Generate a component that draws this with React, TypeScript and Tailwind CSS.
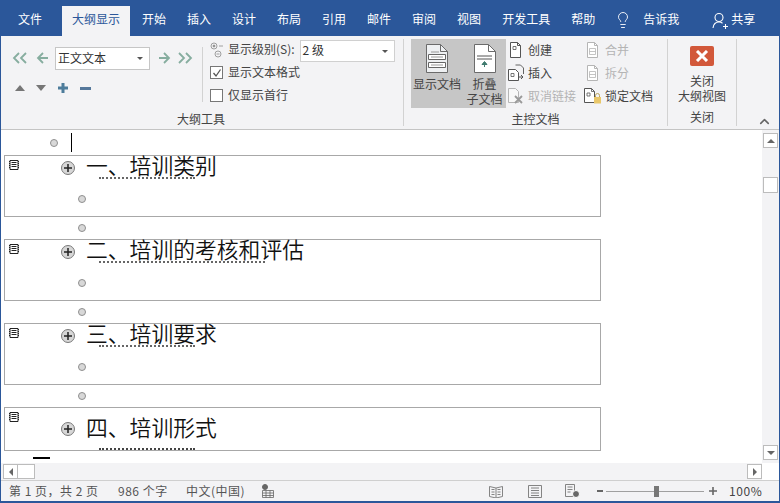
import React from "react";
import { ChevronUp, Lightbulb } from "lucide-react";

const FONT = '"Noto Sans CJK SC", "Noto Sans", sans-serif';

type Kind = "create" | "insert" | "unlink" | "lines" | "lock";

function SmallIcon({ kind, dim }: { kind: Kind; dim?: boolean }) {
  const c = dim ? "#b5b5b5" : "#555";
  const base = (
    <>
      <path d="M2.500 .5h7l3 3v12h-10z" fill="#fff" stroke={c} />
      <path d="M9.500 .5v3h3" stroke={c} />
    </>
  );
  if (kind === "create")
    return (
      <svg width="16" height="16" viewBox="0 0 16 16" fill="none" className="shrink-0">
        {base}
        <path d="M5 4.500h3v3H5z" stroke={c} strokeWidth=".8" />
      </svg>
    );
  if (kind === "lines")
    return (
      <svg width="16" height="16" viewBox="0 0 16 16" fill="none" className="shrink-0">
        {base}
        <path d="M4.500 6.500h6v6h-6zM4.500 9.500h6" stroke={c} strokeWidth=".8" />
      </svg>
    );
  if (kind === "insert")
    return (
      <svg width="16" height="18" viewBox="0 0 16 18" fill="none" className="shrink-0">
        <path d="M7.500 1h5l3 3v6" stroke={c} strokeWidth=".9" />
        <path d="M.5 5.500h7l3 3v8H.5z" fill="#fff" stroke={c} />
        <path d="M3 9.500h3v3H3z" stroke={c} strokeWidth=".8" />
        <path d="M11 13h4M13 11l2 2-2 2" stroke={c} strokeWidth="1" />
      </svg>
    );
  if (kind === "unlink")
    return (
      <svg width="16" height="16" viewBox="0 0 16 16" fill="none" className="shrink-0">
        <path d="M.5 .5h7l3 3v11H.5z" fill="#f8f8f8" stroke={c} />
        <path d="M7 8l7 7M14 8l-7 7" stroke="#9a9a9a" strokeWidth="1.800" />
      </svg>
    );
  return (
    <svg width="18" height="16" viewBox="0 0 18 16" fill="none" className="shrink-0">
      <path d="M.5 .5h7l3 3v11H.5z" fill="#fff" stroke={c} />
      <path d="M7.500 .5v3h3M3 5h3v3H3z" stroke={c} strokeWidth=".8" />
      <path d="M11.500 9V7.500a2 2 0 0 1 4 0V9" stroke="#b9a35c" />
      <rect x="10" y="9" width="7" height="6.500" fill="#e9c76a" />
    </svg>
  );
}

function BigDoc({ fold }: { fold?: boolean }) {
  return (
    <svg width="22" height="29" viewBox="0 0 22 29" fill="none">
      <path d="M.5 .5h14l7 7v21H.5z" fill={fold ? "#fff" : "#eef0f2"} stroke="#6b6b6b" />
      <path d="M14.500 .5v7h7" stroke="#6b6b6b" />
      {fold ? (
        <>
          <path d="M3 12h15M3 15h15" stroke="#555" strokeWidth="1" />
          <path d="M10.500 23v-4M8 20.500l2.500-3 2.500 3z" stroke="#3f7a6e" fill="#3f7a6e" />
        </>
      ) : (
        <>
          <path d="M2.500 10.500h17v5h-17zM2.500 18.500h17v5h-17z" stroke="#666" fill="#fff" />
          <path d="M5 13h12M5 21h12M5 8h8" stroke="#999" />
        </>
      )}
    </svg>
  );
}

function Tabs() {
  const left = ["开始", "插入", "设计", "布局", "引用", "邮件", "审阅", "视图", "开发工具", "帮助"];
  return (
    <div className="h-[36px] bg-[#2b579a] flex text-white text-[12px] shrink-0">
      <div className="w-[62px] pt-[10px] pl-[18px]">文件</div>
      <div className="w-[68px] mt-[6px] pt-[4px] bg-[#f3f3f5] text-[#2b579a] text-center">大纲显示</div>
      <div className="flex gap-[21px] pl-[12px] pt-[10px]">
        {left.map((t) => (
          <span key={t}>{t}</span>
        ))}
      </div>
      <div className="ml-[19px] pt-[11px]">
        <Lightbulb size={18} strokeWidth={1.2} />
      </div>
      <span className="ml-[11px] pt-[10px]">告诉我</span>
      <div className="ml-[33px] pt-[12px]">
        <svg width="16" height="17" viewBox="0 0 16 17" fill="none" stroke="#fff" strokeWidth="1.100">
          <circle cx="7" cy="5.500" r="4" />
          <path d="M1 16c.5-4 3-6 6-6 1.500 0 2.500.4 3.500 1.200M11 14.500h5M13.500 12v5" />
        </svg>
      </div>
      <span className="ml-[3px] pt-[10px]">共享</span>
    </div>
  );
}

function Small({ icon, text, dim }: { icon: React.ReactNode; text: string; dim?: boolean }) {
  return (
    <div className={`h-[23px] flex items-center gap-[4px] whitespace-nowrap ${dim ? "text-[#b4b4b4]" : ""}`}>
      <span className="w-[16px] flex justify-center">{icon}</span>
      <span>{text}</span>
    </div>
  );
}

function Arrow({ d, color }: { d: string; color: string }) {
  return (
    <svg width="16" height="12" viewBox="0 0 16 12" fill="none" stroke={color} strokeWidth="1.800">
      <path d={d} />
    </svg>
  );
}

function Ribbon() {
  return (
    <div className="h-[94px] bg-[#f3f3f5] border-b border-[#c4c4c4] flex text-[12px] text-[#444] shrink-0">
      {/* Group 1 */}
      <div className="w-[402px] flex flex-col">
        <div className="h-[76px] flex pt-[2px]">
          <div className="w-[202px] border-r border-[#d2d2d2] h-[55px] mt-[9px] flex flex-col pl-[11px]">
            <div className="flex items-center h-[23px]">
              <span className="-mt-[1px]">
                <Arrow d="M7 1 2 6l5 5M14 1 9 6l5 5" color="#86ad9f" />
              </span>
              <span className="ml-[8px] -mt-[1px]">
                <Arrow d="M7 1 2 6l5 5M2 6h10" color="#86ad9f" />
              </span>
              <div className="ml-[3px] w-[95px] h-[23px] bg-white border border-[#c6c6c6] flex items-center justify-between pl-[2px] pr-[6px] text-[#333]">
                <span className="-mt-[1px]">正文文本</span>
                <span className="w-0 h-0 border-x-[3px] border-x-transparent border-t-[3px] border-t-[#555]" />
              </div>
              <span className="ml-[5px] -mt-[1px]">
                <Arrow d="M9 1l5 5-5 5M14 6H4" color="#86ad9f" />
              </span>
              <span className="ml-[6px] -mt-[1px]">
                <Arrow d="M2 1l5 5-5 5M9 1l5 5-5 5" color="#86ad9f" />
              </span>
            </div>
            <div className="flex items-center gap-[11px] mt-[11px] pl-[3px] h-[14px]">
              <span className="w-0 h-0 border-x-[5px] border-x-transparent border-b-[6px] border-b-[#767676]" />
              <span className="w-0 h-0 border-x-[5px] border-x-transparent border-t-[6px] border-t-[#767676]" />
              <svg width="10" height="10" viewBox="0 0 10 10" className="ml-[1px]">
                <path d="M3.500 0h3v3.500H10v3H6.500V10h-3V6.500H0v-3h3.500z" fill="#4d7c9b" />
              </svg>
              <span className="w-[11px] h-[3px] bg-[#55789b] ml-[1px]" />
            </div>
          </div>
          <div className="pl-[7px] flex flex-col">
            <div className="flex items-center h-[23px]">
              <svg width="15" height="16" viewBox="0 0 15 16" fill="none" stroke="#8a8a8a" strokeWidth=".8">
                <circle cx="4" cy="4" r="3" />
                <circle cx="4" cy="4" r="1" fill="#8a8a8a" />
                <circle cx="8" cy="12" r="3" />
                <path d="M9 4h4M6.500 12h3" />
              </svg>
              <span className="ml-[3px] -mt-[1px] whitespace-nowrap">显示级别(S):</span>
              <div className="ml-[5px] w-[95px] h-[22px] mt-[3px] bg-white border border-[#d0d0d0] flex items-center justify-between px-[2px] pr-[6px] text-[#333]">
                <span className="-mt-[2px]">2 级</span>
                <span className="w-0 h-0 border-x-[3px] border-x-transparent border-t-[3px] border-t-[#555]" />
              </div>
            </div>
            <div className="flex items-center h-[23px] gap-[5px]">
              <span className="w-[13px] h-[13px] bg-white border border-[#777] flex items-center justify-center">
                <svg width="10" height="10" viewBox="0 0 10 10" fill="none" stroke="#555" strokeWidth="1.300">
                  <path d="M1.500 5 4 8l4.500-6.500" />
                </svg>
              </span>
              <span className="-mt-[1px]">显示文本格式</span>
            </div>
            <div className="flex items-center h-[23px] gap-[5px]">
              <span className="w-[13px] h-[13px] bg-white border border-[#777]" />
              <span className="-mt-[1px]">仅显示首行</span>
            </div>
          </div>
        </div>
        <div className="text-center leading-[18px] -mt-[2px] -ml-[2px]">大纲工具</div>
      </div>
      {/* Group 2 */}
      <div className="w-[264px] border-l border-[#d2d2d2] my-[3px] flex flex-col">
        <div className="h-[72px] flex pl-[7px]">
          <div className="w-[95px] h-[69px] bg-[#c6c6c6] flex">
            <div className="w-[52px] flex flex-col items-center pt-[5px] leading-[15px]">
              <BigDoc />
              <span className="mt-[3px] whitespace-nowrap">显示文档</span>
            </div>
            <div className="flex-1 flex flex-col items-center pt-[5px] leading-[15px]">
              <BigDoc fold />
              <span className="mt-[3px]">折叠</span>
              <span className="whitespace-nowrap">子文档</span>
            </div>
          </div>
          <div className="w-[77px] ml-[2px] -mt-[1px]">
            <Small icon={<SmallIcon kind="create" />} text="创建" />
            <Small icon={<SmallIcon kind="insert" />} text="插入" />
            <Small icon={<SmallIcon kind="unlink" dim />} text="取消链接" dim />
          </div>
          <div className="-mt-[1px]">
            <Small icon={<SmallIcon kind="lines" dim />} text="合并" dim />
            <Small icon={<SmallIcon kind="lines" dim />} text="拆分" dim />
            <Small icon={<SmallIcon kind="lock" />} text="锁定文档" />
          </div>
        </div>
        <div className="text-center leading-[18px] mt-[2px]">主控文档</div>
      </div>
      {/* Group 3 */}
      <div className="w-[69px] border-l border-[#d2d2d2] my-[3px] flex flex-col items-center">
        <div className="w-[24px] h-[24px] mt-[7px] bg-[#d2583a] rounded-[2px] flex items-center justify-center">
          <svg width="14" height="12" viewBox="0 0 14 12" stroke="#fff" strokeWidth="3" fill="none">
            <path d="M2 1l10 10M12 1 2 11" />
          </svg>
        </div>
        <div className="text-center leading-[15px] mt-[7px] whitespace-nowrap">
          关闭
          <br />
          大纲视图
        </div>
        <div className="leading-[18px] mt-[5px]">关闭</div>
      </div>
      <div className="flex-1 border-l border-[#d2d2d2] my-[3px] flex items-end justify-end pr-[7px]">
        <div className="-mb-[3px]">
          <ChevronUp size={15} strokeWidth={2.500} color="#666" />
        </div>
      </div>
    </div>
  );
}

function Bullet() {
  return (
    <div className="h-[22px] flex items-center ml-[77px]">
      <span className="w-[8px] h-[8px] rounded-full bg-[#d8d8d8] border border-[#8f8f8f]" />
    </div>
  );
}

function MiniDoc() {
  return (
    <svg width="10" height="10" viewBox="0 0 10 10" className="mt-[4px] ml-[4px] shrink-0" fill="none">
      <path d="M1 .5h8v9H1z" fill="#fff" stroke="#222" />
      <path d="M2.500 2.500h5M2.500 4.500h5M2.500 6.500h5" stroke="#222" />
      <path d="M0 1.500h1M0 3.500h1M0 5.500h1M0 7.500h1M9 1.500h1M9 3.500h1M9 5.500h1M9 7.500h1" stroke="#222" />
    </svg>
  );
}

function Box({ title, h, last, lineW }: { title: string; h: string; last?: boolean; lineW: string }) {
  return (
    <div className={`relative ml-[3px] w-[597px] border border-[#a8a8a8] flex ${h}`}>
      <MiniDoc />
      <div className={`flex items-start ml-[42px] ${last ? "pt-[10px]" : ""}`}>
        <span
          className={`w-[14px] h-[14px] ${last ? "mt-[4px]" : "mt-[5px]"} rounded-full bg-[#d6d6d6] border border-[#7a7a7a] flex items-center justify-center shrink-0`}
        >
          <svg width="8" height="8" viewBox="0 0 8 8" stroke="#222" strokeWidth="1.500">
            <path d="M0 4h8M4 0v8" />
          </svg>
        </span>
        <div className="ml-[11px] -mt-[2px]">
          <div className="text-[21.800px] leading-[22px] text-[#111] whitespace-nowrap" style={{ fontWeight: 350 }}>
            {title}
          </div>
          {!last && <div className={`ml-[13px] mt-[1px] border-b-2 border-dotted border-[#666] ${lineW}`} />}
        </div>
      </div>
      {!last && (
        <div className="absolute left-[73px] top-[39px]">
          <span className="block w-[8px] h-[8px] rounded-full bg-[#d8d8d8] border border-[#8f8f8f]" />
        </div>
      )}
      {last && <div className="absolute left-[94px] bottom-0 w-[96px] border-b-2 border-dotted border-[#444]" />}
    </div>
  );
}

function Doc() {
  return (
    <div className="flex-1 min-w-0 bg-white">
      <div className="h-[25px] flex items-center pl-[49px]">
        <span className="w-[8px] h-[8px] rounded-full bg-[#d8d8d8] border border-[#8f8f8f]" />
        <span className="ml-[13px] w-px h-[19px] bg-black" />
      </div>
      <Box title="一、培训类别" h="h-[62px]" lineW="w-[96px]" />
      <Bullet />
      <Box title="二、培训的考核和评估" h="h-[62px]" lineW="w-[166px]" />
      <Bullet />
      <Box title="三、培训要求" h="h-[62px]" lineW="w-[96px]" />
      <Bullet />
      <Box title="四、培训形式" h="h-[44px]" last lineW="w-[96px]" />
      <div className="ml-[32px] mt-[6px] w-[17px] h-[2px] bg-black" />
    </div>
  );
}

function VScroll() {
  return (
    <div className="w-[17px] bg-[#f3f3f5] flex flex-col items-center shrink-0">
      <div className="w-[15px] h-[15px] mt-[3px] bg-white border border-[#bcbcbc] flex items-center justify-center">
        <span className="w-0 h-0 border-x-[4px] border-x-transparent border-b-[4px] border-b-[#666]" />
      </div>
      <div className="w-[15px] h-[16px] mt-[29px] bg-white border border-[#bcbcbc]" />
      <div className="flex-1" />
      <div className="w-[15px] h-[15px] mb-[3px] bg-white border border-[#bcbcbc] flex items-center justify-center">
        <span className="w-0 h-0 border-x-[4px] border-x-transparent border-t-[4px] border-t-[#666]" />
      </div>
    </div>
  );
}

function HScroll() {
  return (
    <div className="h-[17px] flex shrink-0">
      <div className="flex-1 bg-[#f3f3f5] flex items-center pl-[2px] justify-between">
        <div className="flex">
          <div className="w-[15px] h-[15px] bg-white border border-[#bcbcbc] flex items-center justify-center">
            <span className="w-0 h-0 border-y-[4px] border-y-transparent border-r-[4px] border-r-[#666]" />
          </div>
          <div className="w-[17px] h-[15px] bg-white border border-l-0 border-[#bcbcbc]" />
        </div>
        <div className="w-[15px] h-[15px] bg-white border border-[#bcbcbc] flex items-center justify-center">
          <span className="w-0 h-0 border-y-[4px] border-y-transparent border-l-[4px] border-l-[#666]" />
        </div>
      </div>
      <div className="w-[17px] bg-white" />
    </div>
  );
}

function StatusBar() {
  return (
    <div className="h-[21px] bg-[#f3f3f5] border-t border-[#cfcfcf] flex items-center text-[12px] text-[#555] shrink-0 pl-[8px] tracking-[0.5px] whitespace-nowrap">
      <span className="w-[90px]">第 1 页，共 2 页</span>
      <span className="ml-[19px] w-[49px]">986 个字</span>
      <span className="ml-[19px] w-[56px]">中文(中国)</span>
      <svg width="14" height="14" viewBox="0 0 14 14" className="ml-[19px]" fill="none" stroke="#666">
        <circle cx="4" cy="3" r="2.500" fill="#666" />
        <path d="M1.500 6.500h11v7h-11z M1.500 9h11M1.500 11.500h11M5 6.500v7M9 6.500v7" strokeWidth=".8" />
      </svg>
      <svg width="14" height="13" viewBox="0 0 14 13" className="ml-[214px]" fill="none" stroke="#777">
        <path d="M.5 1.500 7 3l6.500-1.500v10L7 13 .5 11.500zM7 3v10M2.500 4.500h3M2.500 7h3M2.500 9.500h3M8.500 4.500h3M8.500 7h3M8.500 9.500h3" strokeWidth=".9" />
      </svg>
      <svg width="14" height="13" viewBox="0 0 14 13" className="ml-[25px]" fill="none" stroke="#777">
        <path d="M.5.500h13v12H.5zM3 3h8M3 5.500h8M3 8h8M3 10.500h8" strokeWidth=".9" />
      </svg>
      <svg width="15" height="14" viewBox="0 0 15 14" className="ml-[23px]" fill="none" stroke="#777">
        <path d="M.5.500h9v12h-9zM2.500 3h5M2.500 5.500h5M2.500 8h3" strokeWidth=".9" />
        <circle cx="11" cy="10" r="3.500" fill="#666" stroke="#fff" />
      </svg>
      <span className="ml-[17px] w-[6px] h-[2px] bg-[#666]" />
      <div className="ml-[3px] w-[98px] h-px bg-[#a0a0a0] flex items-center">
        <span className="ml-[48px] w-[5px] h-[11px] bg-[#777]" />
      </div>
      <svg width="8" height="8" viewBox="0 0 8 8" className="ml-[5px]" stroke="#666" strokeWidth="1.600">
        <path d="M0 4h8M4 0v8" />
      </svg>
      <span className="ml-[12px] text-[#444] tracking-[0.6px]">100%</span>
    </div>
  );
}

export default function App() {
  return (
    <div className="w-[780px] h-[503px] overflow-hidden bg-[#2b579a] flex flex-col" style={{ fontFamily: FONT }}>
      <Tabs />
      <div className="flex-1 min-h-0 flex flex-col pl-px pr-px pb-[2px]">
        <Ribbon />
        <div className="flex flex-1 min-h-0 overflow-hidden">
          <Doc />
          <VScroll />
        </div>
        <HScroll />
        <StatusBar />
      </div>
    </div>
  );
}
